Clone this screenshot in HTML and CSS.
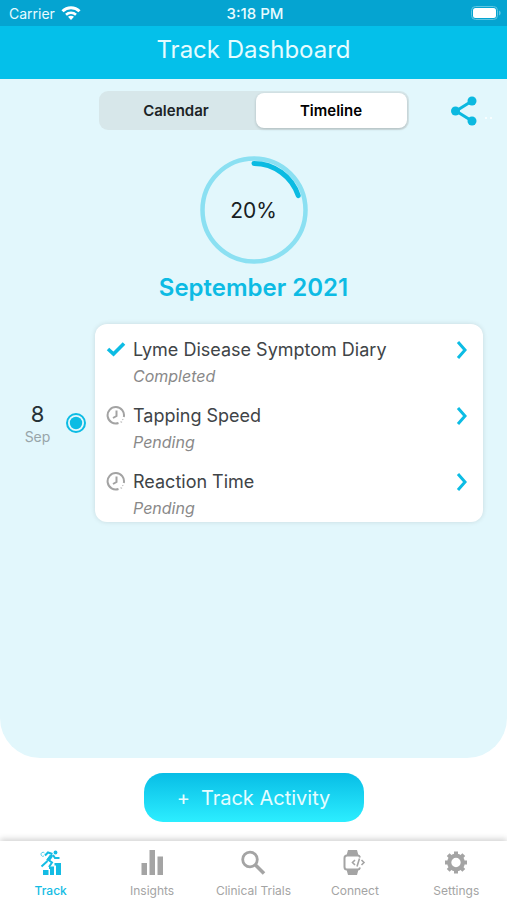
FILE: index.html
```html
<!DOCTYPE html>
<html lang="en">
<head>
<meta charset="utf-8">
<meta name="viewport" content="width=device-width, initial-scale=1">
<title>Track Dashboard</title>
<link rel="stylesheet" href="styles.css">
</head>
<body>
<div class="app">
  <div class="status-bar">
    <div class="carrier">
      <span>Carrier</span>
      <svg width="20" height="14" viewBox="0 0 20 14" fill="none" stroke="#fff" stroke-width="3" aria-hidden="true">
        <path d="M1.500 5.200C6.200 .5 13.800 .5 18.500 5.200"/>
        <path d="M5 8.700c2.800-2.600 7.200-2.600 10 0" stroke-width="2.600"/>
        <path d="M10 14l-3-3.300c1.800-1.400 4.200-1.400 6 0z" fill="#fff" stroke="none"/>
      </svg>
    </div>
    <span class="clock">3:18 PM</span>
    <div class="battery">
      <svg width="30" height="14" viewBox="0 0 30 14" aria-hidden="true">
        <rect x=".5" y=".5" width="26" height="13" rx="4" fill="none" stroke="#5fc6e2"/>
        <rect x="2" y="2" width="23" height="10" rx="2.500" fill="#fff"/>
        <path d="M28 4.500c2.200 1 2.200 4 0 5z" fill="#5fc6e2"/>
      </svg>
    </div>
  </div>
  <header class="title-bar"><h1>Track Dashboard</h1></header>

  <main class="panel">
    <div class="toolbar">
      <div class="segmented">
        <button type="button" class="segment">Calendar</button>
        <button type="button" class="segment selected" aria-pressed="true">Timeline</button>
      </div>
      <button type="button" class="share" aria-label="Share">
        <svg width="42" height="30" viewBox="0 0 42 30" aria-hidden="true">
          <path d="M22 5 6 15l16 10" fill="none" stroke="#0bb9e0" stroke-width="3"/>
          <g fill="#0bb9e0"><circle cx="22" cy="5" r="4.500"/><circle cx="5.500" cy="15" r="4.500"/><circle cx="22" cy="25" r="4.500"/></g>
          <g fill="#fff"><circle cx="36" cy="22" r="1"/><circle cx="41" cy="22" r="1"/></g>
        </svg>
      </button>
    </div>

    <div class="progress">
      <svg width="108" height="108" viewBox="0 0 108 108" fill="none" aria-hidden="true">
        <circle cx="54" cy="54" r="51.500" stroke="#8be0f2" stroke-width="4.500"/>
        <path d="M54 7.500A46.500 46.500 0 0 1 98.200 39.600" stroke="#0bbbe2" stroke-width="5" stroke-linecap="round"/>
      </svg>
      <span class="percent">20%</span>
    </div>
    <h2 class="month">September 2021</h2>

    <section class="day">
      <div class="date"><span class="day-number">8</span><span class="day-month">Sep</span></div>
      <svg class="marker" width="20" height="20" viewBox="0 0 20 20" aria-hidden="true">
        <circle cx="10" cy="10" r="9" fill="none" stroke="#0cbce4" stroke-width="2"/>
        <circle cx="10" cy="10" r="6.200" fill="#0cbce4"/>
      </svg>
      <ul class="card">
        <li><a class="task" href="#">
          <svg class="task-icon" width="20" height="20" viewBox="0 0 20 20" fill="none" aria-hidden="true"><path d="M2 9l5.500 5L18 3.500" stroke="#0cbce4" stroke-width="3.600"/></svg>
          <span class="task-name">Lyme Disease Symptom Diary</span>
          <svg class="chevron" width="12" height="20" viewBox="0 0 12 20" fill="none" aria-hidden="true"><path d="M2 2l7 8-7 8" stroke="#0cbce4" stroke-width="3"/></svg>
          <span class="task-state">Completed</span>
        </a></li>
        <li><a class="task" href="#">
          <svg class="task-icon" width="20" height="20" viewBox="0 0 20 20" fill="none" stroke="#a3a3a3" stroke-width="2" aria-hidden="true"><path d="M12.500 17A8.200 8.200 0 1 1 17.800 11"/><path d="M10.500 4.500v5.500L7 12"/><path d="M14.500 15.500l1.500 1M16.500 13l.5 1" stroke-width="1.500" stroke="#c4c4c4"/></svg>
          <span class="task-name">Tapping Speed</span>
          <svg class="chevron" width="12" height="20" viewBox="0 0 12 20" fill="none" aria-hidden="true"><path d="M2 2l7 8-7 8" stroke="#0cbce4" stroke-width="3"/></svg>
          <span class="task-state">Pending</span>
        </a></li>
        <li><a class="task" href="#">
          <svg class="task-icon" width="20" height="20" viewBox="0 0 20 20" fill="none" stroke="#a3a3a3" stroke-width="2" aria-hidden="true"><path d="M12.500 17A8.200 8.200 0 1 1 17.800 11"/><path d="M10.500 4.500v5.500L7 12"/><path d="M14.500 15.500l1.500 1M16.500 13l.5 1" stroke-width="1.500" stroke="#c4c4c4"/></svg>
          <span class="task-name">Reaction Time</span>
          <svg class="chevron" width="12" height="20" viewBox="0 0 12 20" fill="none" aria-hidden="true"><path d="M2 2l7 8-7 8" stroke="#0cbce4" stroke-width="3"/></svg>
          <span class="task-state">Pending</span>
        </a></li>
      </ul>
    </section>
  </main>

  <div class="actions">
    <button type="button" class="track-button"><span>+</span><span>Track Activity</span></button>
  </div>

  <nav class="tabs">
    <a class="tab active" href="#">
      <svg width="26" height="26" viewBox="0 0 26 26" fill="none" stroke="currentColor" stroke-width="2" aria-hidden="true">
        <circle cx="17.500" cy="2.500" r="1.900" fill="currentColor" stroke="none"/>
        <path d="M14.500 4 10 2.500 7 5.500M14 5l-5 5.500M15 5l2 3h4.500"/>
        <path d="M13.500 5.500 10 10.500" stroke-width="3.500"/>
        <path d="M10.500 10l3.500 2.500-3 4.500M9.500 11l-6 5.500"/>
        <path d="M6.500 3a2 2 0 1 0-.5 3" stroke-width="1" opacity=".7"/>
        <g fill="currentColor" stroke="none"><rect x="5" y="20" width="5.500" height="5"/><path d="M11 16.500h5V25h-4v-6H11zM16.500 13H23v12h-5V15.500h-1.500z"/></g>
      </svg>
      <span>Track</span>
    </a>
    <a class="tab" href="#">
      <svg width="26" height="26" viewBox="0 0 26 26" fill="currentColor" aria-hidden="true"><path d="M2.500 13h5.500v12h-5.500zM10.500 0h5.500v25h-5.500zM18.500 6.500h5.500V25h-5.500z"/></svg>
      <span>Insights</span>
    </a>
    <a class="tab" href="#">
      <svg width="26" height="26" viewBox="0 0 26 26" fill="none" stroke="currentColor" aria-hidden="true"><circle cx="10" cy="9.500" r="7.300" stroke-width="2.800"/><path d="M15 14.500l9 9" stroke-width="3.500"/></svg>
      <span>Clinical Trials</span>
    </a>
    <a class="tab" href="#">
      <svg width="26" height="26" viewBox="0 0 26 26" fill="none" stroke="currentColor" aria-hidden="true">
        <path d="M6 0h9l1.500 5.500h-12zM4.500 19.500h12L15 25H6z" fill="currentColor" stroke="none"/>
        <path d="M18 7.500q-.5-2-2-2H5Q2.500 5.500 2.500 8v9q0 2.500 2.500 2.500h11q1.500 0 2-2" stroke-width="2"/>
        <path d="M13 10 10.500 12.500l2.500 2.500M17.500 8.500l-2.500 8M19.500 10l2.500 2.500-2.500 2.500" stroke-width="1.600"/>
      </svg>
      <span>Connect</span>
    </a>
    <a class="tab" href="#">
      <svg width="26" height="26" viewBox="0 0 26 26" fill="none" stroke="currentColor" aria-hidden="true">
        <circle cx="13" cy="12.500" r="6.800" stroke-width="4.200"/>
        <path d="M13 1.500v4M13 19.500v4M2 12.500h4M20 12.500h4M5.200 4.700 8 7.500M18 17.500l2.800 2.800M20.800 4.700 18 7.500M8 17.500l-2.800 2.800" stroke-width="4"/>
      </svg>
      <span>Settings</span>
    </a>
  </nav>
</div>
</body>
</html>
```
FILE: styles.css
```css
* { box-sizing: border-box; }

body {
  margin: 0;
  background: #fff;
  font-family: Inter, "Liberation Sans", sans-serif;
  color: #404447;
}

button { border: 0; padding: 0; background: none; font: inherit; }
a { color: inherit; text-decoration: none; }
svg { display: block; }

.app {
  display: flex;
  flex-direction: column;
  min-height: 100vh;
}

.status-bar {
  display: grid;
  grid-template-columns: 1fr auto 1fr;
  align-items: center;
  height: 26px;
  padding: 0 6px 0 9px;
  background: #05a4d1;
  color: #e8fbff;
  font-size: 14px;
}
.carrier { display: flex; align-items: center; gap: 6px; }
.clock { font-size: 15px; font-weight: 500; }
.battery { justify-self: end; }

.title-bar {
  padding: 8px 0 13px;
  background: #04c0ea;
  text-align: center;
}
.title-bar h1 {
  margin: 0;
  color: #e6fcff;
  font-size: 24px;
  font-weight: 400;
  line-height: 32px;
}

.panel {
  flex: 1;
  padding: 12px 24px 24px;
  border-radius: 0 0 40px 40px;
  background: #e2f7fc;
}

.toolbar {
  display: grid;
  grid-template-columns: 1fr 310px 1fr;
  align-items: center;
}
.segmented {
  grid-column: 2;
  display: grid;
  grid-template-columns: 1fr 1fr;
  gap: 4px;
  padding: 2px;
  border-radius: 9px;
  background: #d7e7ea;
}
.segment {
  height: 35px;
  border-radius: 8px;
  color: #1b2326;
  font-size: 15px;
  font-weight: 600;
}
.segment.selected {
  background: #fff;
  color: #000;
  box-shadow: 0 1px 3px #0003;
}
.share { justify-self: end; margin-right: -9px; }

.progress {
  display: grid;
  place-items: center;
  margin-top: 26px;
}
.progress > * { grid-area: 1 / 1; }
.percent { color: #172022; font-size: 21px; }

.month {
  margin: 9px 0 0;
  color: #0dbbe4;
  font-size: 24px;
  font-weight: 600;
  line-height: 30px;
  text-align: center;
}

.day {
  display: grid;
  grid-template-columns: 27px 20px 1fr;
  align-items: center;
  column-gap: 15px;
  margin-top: 21px;
}
.marker { justify-self: center; }
.date { display: grid; justify-items: center; padding-top: 3px; }
.day-number { color: #263236; font-size: 22px; line-height: 25px; }
.day-month { color: #98a5a9; font-size: 14px; line-height: 20px; }

.card {
  margin: 0 0 0 -6px;
  padding: 0;
  border-radius: 12px;
  background: #fff;
  box-shadow: 0 0 5px #0000001f;
  list-style: none;
}
.task {
  display: grid;
  grid-template-columns: 20px 1fr 12px;
  column-gap: 7px;
  align-items: center;
  height: 66px;
  padding: 12px 15px 0 11px;
  align-content: start;
}
.task-name { font-size: 18px; line-height: 27px; }
.task-state {
  grid-column: 2;
  color: #898989;
  font-size: 16px;
  font-style: italic;
  line-height: 26px;
}

.actions {
  display: flex;
  justify-content: center;
  padding: 15px 0 19px;
}
.track-button {
  display: flex;
  align-items: center;
  justify-content: center;
  gap: 11px;
  width: 220px;
  height: 49px;
  border-radius: 19px;
  background: linear-gradient(#08bde6, #2ceeff);
  color: #e6fdff;
  font-size: 20px;
}

.tabs {
  display: grid;
  grid-template-columns: repeat(5, 1fr);
  padding: 9px 0 0;
  height: 59px;
  background: #fff;
  box-shadow: 0 -2px 6px #0000002e;
}
.tab {
  display: flex;
  flex-direction: column;
  align-items: center;
  gap: 7px;
  color: #a4a4a4;
  font-size: 12px;
  line-height: 16px;
  white-space: nowrap;
}
.tab.active { color: #14bce4; }
.tab.active span { font-weight: 500; }
```
